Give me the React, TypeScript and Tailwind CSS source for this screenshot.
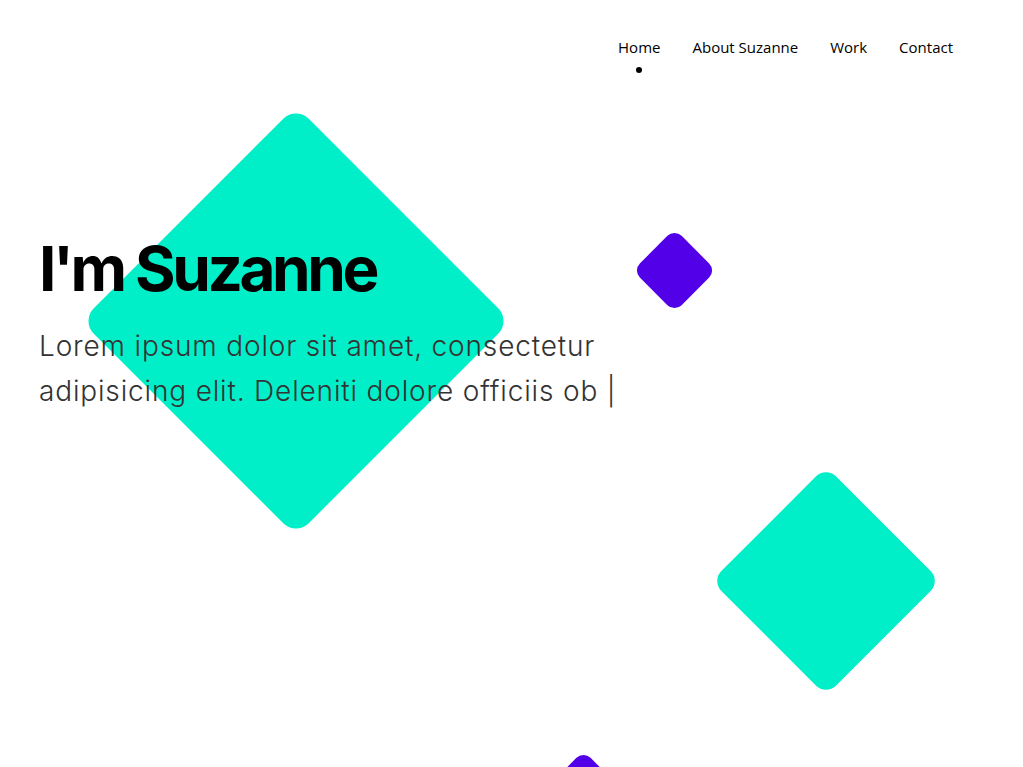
import React from "react";

const navLinks = ["Home", "About Suzanne", "Work", "Contact"];

const App = () => {
  return (
    <div className="relative min-h-[3450px] overflow-hidden bg-white text-black">
      {/* decorative diamonds */}
      <div className="absolute left-[144px] top-[169px] h-[304px] w-[304px] rotate-45 rounded-[18px] bg-[#00efc9]" />
      <div className="absolute left-[645px] top-[241px] h-[59px] w-[59px] rotate-45 rounded-[10px] bg-[#5200e8]" />
      <div className="absolute left-[745px] top-[500px] h-[162px] w-[162px] rotate-45 rounded-[14px] bg-[#00efc9]" />
      <div className="absolute left-[554px] top-[763px] h-[59px] w-[59px] rotate-45 rounded-[10px] bg-[#5200e8]" />

      <header className="relative z-10 flex justify-end pr-[70px] pt-[37px] font-['Open_Sans',sans-serif] text-[15px] leading-5 text-black">
        <nav className="flex gap-8">
          {navLinks.map((link, i) => (
            <a key={link} href="#" className="flex flex-col items-center">
              <span>{link}</span>
              {i === 0 && <span className="mt-[10px] h-[6px] w-[6px] rounded-full bg-black" />}
            </a>
          ))}
        </nav>
      </header>

      <section className="relative z-10 pl-[39px] pt-[165px] font-['Inter',sans-serif]">
        <h1 className="text-[62px] font-bold leading-none tracking-[-0.055em]">I'm Suzanne</h1>
        <p className="mt-[24px] max-w-[600px] text-[28px] font-light leading-[45px] tracking-[0.03em] text-[#333]">
          Lorem ipsum dolor sit amet, consectetur adipisicing elit. Deleniti dolore officiis{" "}
          <span className="whitespace-nowrap">ob |</span>
        </p>
      </section>
    </div>
  );
};

export default App;
